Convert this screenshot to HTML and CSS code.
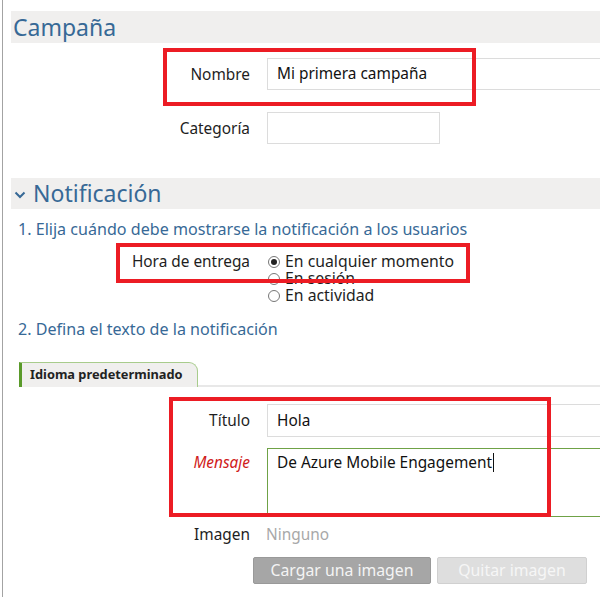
FILE: index.html
```html
<!DOCTYPE html>
<html lang="es">
<head>
<meta charset="utf-8">
<link rel="stylesheet" href="styles.css">
</head>
<body>
<div class="page">
  <h2 class="band">Campaña</h2>

  <div class="row row-nombre">
    <label class="lbl">Nombre</label>
    <div class="field">Mi primera campaña</div>
    <span class="hl hl-nombre"></span>
  </div>
  <div class="row row-cat">
    <label class="lbl">Categoría</label>
    <div class="field field-short"></div>
  </div>

  <h2 class="band band-notif"><span class="chev"><svg width="12" height="8" viewBox="0 0 12 8"><path d="M1.5 1.5 L6 6 L10.5 1.5" fill="none" stroke="#376996" stroke-width="2"/></svg></span>Notificación</h2>

  <p class="step">1. Elija cuándo debe mostrarse la notificación a los usuarios</p>

  <div class="row row-hora">
    <label class="lbl lbl-hora">Hora de entrega</label>
    <div class="radios">
      <div class="radio on"><span class="dot"></span>En cualquier momento</div>
      <div class="radio r2"><span class="dot"></span>En sesión</div>
      <div class="radio"><span class="dot"></span>En actividad</div>
    </div>
    <span class="hl hl-hora"></span>
  </div>

  <p class="step step2">2. Defina el texto de la notificación</p>

  <div class="tabs"><span class="tab">Idioma predeterminado</span></div>

  <div class="block">
    <div class="row row-titulo">
      <label class="lbl">Título</label>
      <div class="field">Hola</div>
    </div>
    <div class="row row-msg">
      <label class="lbl lbl-req">Mensaje</label>
      <div class="field area">De Azure Mobile Engagement<span class="caret"></span></div>
    </div>
    <span class="hl hl-block"></span>
  </div>

  <div class="row row-img">
    <label class="lbl">Imagen</label>
    <div class="none">Ninguno</div>
  </div>
  <div class="buttons">
    <button class="btn btn-load">Cargar una imagen</button>
    <button class="btn btn-del">Quitar imagen</button>
  </div>
</div>
</body>
</html>
```

FILE: styles.css
```css
* { box-sizing: border-box; }
html, body { margin: 0; padding: 0; background: #fff; }
body {
  font-family: "Noto Sans", "Open Sans", sans-serif;
  color: #1e1e1e;
  font-size: 15.4px;
  width: 600px;
  height: 597px;
  overflow: hidden;
}
.page {
  margin-left: 2px;
  border-left: 1px solid #a3a3a3;
  height: 597px;
  padding: 11px 0 0 8px;
}
.band {
  margin: 0;
  height: 32px;
  line-height: 31px;
  background: #f0efee;
  color: #376996;
  font-weight: normal;
  font-size: 23px;
  padding-left: 2px;
  display: flex;
  align-items: center;
}
.band-notif { margin-top: 34px; height: 31px; }
.chev { display: inline-flex; width: 20px; padding-left: 1px; margin-top: 3px; }

.row {
  position: relative;
  display: grid;
  grid-template-columns: 239px 1fr;
  column-gap: 17px;
  align-items: center;
}
.lbl { text-align: right; }
.field {
  height: 32px;
  border: 1px solid #dcdcdc;
  border-right: none;
  padding-left: 9px;
  line-height: 30px;
  color: #111;
}
.field-short { width: 173px; border-right: 1px solid #dcdcdc; }
.row-nombre { margin-top: 15px; }
.row-cat { margin-top: 22px; }

.hl {
  position: absolute;
  border: 4px solid #ec1c24;
  pointer-events: none;
}
.hl-nombre { left: 152px; top: -10px; width: 313px; height: 58px; }

.step {
  margin: 0;
  color: #376996;
  font-size: 16.1px;
  padding-left: 7px;
}
.step:first-of-type { margin-top: 9px; line-height: 22px; }

.row-hora { margin-top: 13px; align-items: start; }
.lbl-hora { line-height: 18px; padding-right: 0; }
.radios { margin-left: 1px; }
.radio {
  display: flex;
  align-items: center;
  line-height: 17px;
  height: 17px;
  gap: 5px;
  font-size: 15.8px;
}
.dot {
  width: 12px; height: 12px;
  border: 1px solid #777;
  border-radius: 50%;
  background: #fff;
  position: relative;
  flex: none;
}
.radio.on .dot::after {
  content: "";
  position: absolute;
  left: 2px; top: 2px;
  width: 6px; height: 6px;
  border-radius: 50%;
  background: #222;
}
.r2 { height: 17px; }
.hl-hora { left: 105px; top: -10px; width: 354px; height: 40px; }

.step2 { margin-top: 14px; line-height: 22px; }

.tabs {
  margin-top: 22px;
  margin-left: 8px;
  border-bottom: 2px solid #e8e8e8;
  height: 25px;
}
.tab {
  display: inline-block;
  height: 25px;
  width: 179px;
  border-left: 3px solid #5a9a2a;
  border-top: 1px solid #a8cc8c;
  border-right: 1px solid #a8cc8c;
  border-top-right-radius: 9px;
  background: #f0efee;
  font-size: 12.8px;
  font-weight: bold;
  color: #222;
  padding-left: 8px;
  line-height: 23px;
}

.block { position: relative; margin-top: 17px; }
.row-titulo .field { height: 33px; line-height: 31px; }
.row-msg { margin-top: 11px; align-items: start; }
.row-msg .lbl { margin-top: 4px; }
.lbl-req { color: #d01b1b; font-style: italic; }
.area {
  height: 69px;
  border: 1px solid #6fa246;
  border-right: none;
  line-height: 28px;
  padding-top: 0;
  position: relative;
}
.caret {
  display: inline-block;
  width: 1px;
  height: 19px;
  background: #111;
  vertical-align: -4px;
  margin-left: 1px;
}
.hl-block { left: 158px; top: -7px; width: 382px; height: 120px; }

.row-img { margin-top: 7px; }
.none { color: #a8a8a8; margin-left: -1px; }
.buttons {
  display: flex;
  gap: 6px;
  margin-top: 12px;
  padding-left: 242px;
}
.btn {
  font-family: inherit;
  font-size: 15.8px;
  height: 27px;
  border-radius: 2px;
  border: 1px solid #bdbdbd;
  padding: 0;
  line-height: 25px;
}
.btn-load { width: 178px; background: #a6a6a6; color: #f4f4f4; border-color: #999; }
.btn-del { width: 150px; background: #dedede; color: #f6f6f6; border-color: #d0d0d0; }
```
